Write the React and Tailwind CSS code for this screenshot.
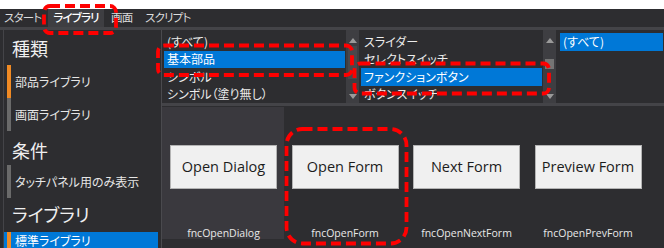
import React from "react";

const jp = "font-['Noto_Sans_CJK_JP',sans-serif] [font-feature-settings:'palt']";

function Arrow({ down }) {
  return (
    <svg width="8" height="5" viewBox="0 0 8 5">
      <path d={down ? "M0 0 L8 0 L4 5 Z" : "M0 5 L8 5 L4 0 Z"} fill="#9a9a9a" />
    </svg>
  );
}

function ScrollBar({ thumbTop, thumbH, thumbColor }) {
  return (
    <div className="w-[13px] h-full bg-[#3e3e42] flex flex-col items-center pt-[8px]">
      <Arrow />
      <div className="shrink-0" style={{ height: thumbTop }} />
      <div className="w-[9px] shrink-0" style={{ height: thumbH, background: thumbColor }} />
      <div className="flex-1" />
      <div className="pb-[4px]">
        <Arrow down />
      </div>
    </div>
  );
}

function List({ items, selected, width }) {
  return (
    <div className="h-full pt-[3px] flex flex-col" style={{ width }}>
      {items.map((t, i) => (
        <div
          key={t}
          className={`h-[17.5px] mx-[1px] pl-[3px] flex items-center text-[12px] text-[#ececec] whitespace-nowrap ${
            i === selected ? "bg-[#0078d7] text-white" : ""
          }`}
        >
          {t}
        </div>
      ))}
    </div>
  );
}

function Heading({ children, className }) {
  return (
    <div className={`pl-[8px] pr-[11px] ${className}`}>
      <div className="text-[18px] leading-[22px] text-[#f0f0f0]">{children}</div>
    </div>
  );
}

function Rule({ className }) {
  return <div className={`ml-[8px] mr-[11px] h-[2px] bg-[#5c5c5c] ${className}`} />;
}

function Item({ children, active }) {
  return (
    <div className="h-[33px] flex items-stretch">
      <div className={`ml-[3px] w-[4px] ${active ? "bg-[#f08a24]" : "bg-[#6a6a6a]"}`} />
      <div className="pl-[4px] flex items-center text-[12px] text-[#e6e6e6] whitespace-nowrap">{children}</div>
    </div>
  );
}

function Cell({ title, fn, hover }) {
  return (
    <div className={`w-[121.5px] h-[132px] pl-[8px] flex flex-col ${hover ? "bg-[#3a393e]" : ""}`}>
      <div className="mt-[38px] w-[107px] h-[44px] bg-[#f0f0f0] border border-[#b4b4b4] flex items-center justify-center text-[14.5px] text-[#1c1c1c] font-['Open_Sans',sans-serif]">
        {title}
      </div>
      <div className="flex-1" />
      <div className="w-[107px] text-center text-[10.5px] leading-[12px] text-[#e8e8e8] font-['Open_Sans',sans-serif]">
        {fn}
      </div>
    </div>
  );
}

export default function App() {
  return (
    <div className={`relative w-[664px] h-[248px] overflow-hidden bg-[#2d2d30] ${jp}`}>
      <div className="h-[9px] bg-white" />
      {/* menu */}
      <div className="h-[18px] flex items-stretch text-[11.5px] tracking-[-0.8px] text-[#dcdcdc] whitespace-nowrap">
        <div className="w-[48px] pl-[4px] flex items-center">スタート</div>
        <div className="w-[56px] bg-[#3e3e42] flex items-center justify-center font-medium text-white">ライブラリ</div>
        <div className="w-[37px] pl-[7px] flex items-center">画面</div>
        <div className="pl-[4px] flex items-center">スクリプト</div>
      </div>
      <div className="h-[3px] bg-[#444448]" />

      <div className="flex h-[218px]">
        {/* left panel */}
        <div className="w-[161px] pl-[3px]">
          <div className="h-full border-l border-[#444448] flex flex-col">
            <Heading className="mt-[7px]">種類</Heading>
            <Rule className="mt-[3px]" />
            <div className="mt-[3px]">
              <Item active>部品ライブラリ</Item>
              <Item>画面ライブラリ</Item>
            </div>
            <Heading className="mt-[8px]">条件</Heading>
            <Rule className="mt-[1px]" />
            <div className="mt-[3px]">
              <Item>タッチパネル用のみ表示</Item>
            </div>
            <Heading className="mt-[5px]">ライブラリ</Heading>
            <Rule className="mt-[0px]" />
            <div className="mt-[7px] mr-[3px] h-[20px] bg-[#0078d7] flex">
              <div className="ml-[3px] w-[4px] bg-[#f08a24]" />
              <div className="pl-[4px] text-[12px] text-white leading-[18px] whitespace-nowrap">標準ライブラリ</div>
            </div>
          </div>
        </div>
        <div className="w-[1px] bg-[#4a4a4e]" />

        {/* right column */}
        <div className="flex-1 flex flex-col">
          <div className="h-[73px] flex pl-[1px]">
            <List width={183} selected={1} items={["(すべて)", "基本部品", "シンボル", "シンボル（塗り無し）"]} />
            <ScrollBar thumbTop={3} thumbH={33} thumbColor="#48484c" />
            <div className="w-[1px]" />
            <List width={183} selected={2} items={["スライダー", "セレクトスイッチ", "ファンクションボタン", "ボタンスイッチ"]} />
            <ScrollBar thumbTop={16} thumbH={10} thumbColor="#747474" />
            <div className="w-[3px]" />
            <List width={105} selected={0} items={["(すべて)"]} />
          </div>
          <div className="h-[3px] bg-[#444448]" />
          <div className="flex pt-[1px]">
            <Cell hover title="Open Dialog" fn="fncOpenDialog" />
            <Cell title="Open Form" fn="fncOpenForm" />
            <Cell title="Next Form" fn="fncOpenNextForm" />
            <Cell title="Preview Form" fn="fncOpenPrevForm" />
          </div>
        </div>
      </div>

      {/* annotations */}
      <svg className="absolute inset-0 pointer-events-none" width="664" height="248">
        <g fill="none" stroke="#ff0000" strokeWidth="3.8" strokeDasharray="10 5">
          <rect x="44" y="6" width="72" height="27" rx="6" />
          <rect x="158" y="45.5" width="194" height="29.5" rx="6" />
          <rect x="354.5" y="63.5" width="194.5" height="30" rx="6" />
          <rect x="286.5" y="129" width="120" height="114.5" rx="16" />
        </g>
      </svg>
    </div>
  );
}
